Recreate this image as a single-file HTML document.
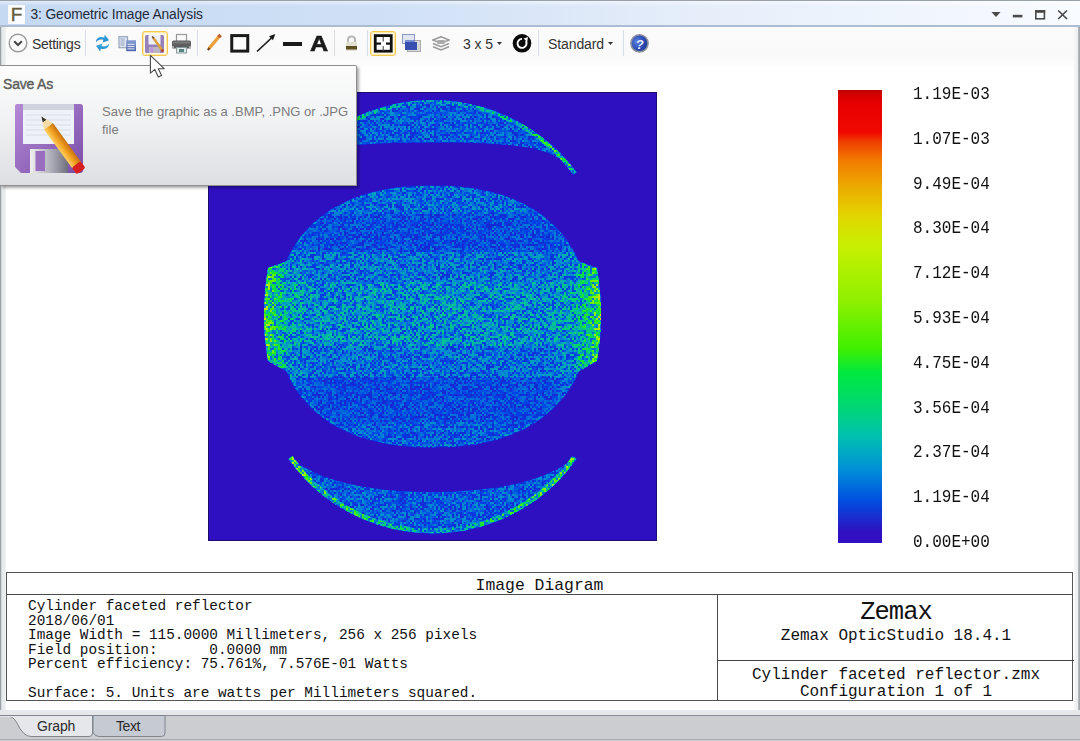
<!DOCTYPE html>
<html><head><meta charset="utf-8">
<style>
*{margin:0;padding:0;box-sizing:border-box}
html,body{width:1080px;height:741px;overflow:hidden;background:#fff}
body{position:relative;font-family:"Liberation Sans",sans-serif}
.abs{position:absolute}
#titlebar{left:0;top:0;width:1080px;height:27px;background:linear-gradient(180deg,rgba(255,255,255,0.5) 0,rgba(255,255,255,0) 5px),linear-gradient(90deg,#c6d9f3 0%,#cfe0f6 35%,#e6eefa 65%,#f8fbff 100%);border-top:1px solid #98a0a8;border-bottom:2px solid #acbdd2}
#title{left:30.5px;top:6.8px;font-size:13.8px;color:#1e2a3a;white-space:nowrap;letter-spacing:-0.12px}
#ficon{left:8px;top:5px;width:17px;height:19px;background:#fbfcfd;color:#675c3e;font-size:19px;line-height:19px;text-align:center;-webkit-text-stroke:0.4px #675c3e}
#toolbar{left:0;top:27px;width:1080px;height:39px;background:linear-gradient(180deg,#fbfbfb 0,#f9f9f9 80%,#fdfdfd 100%)}
.sep{position:absolute;top:30px;width:1px;height:26px;background:#d8dce4}
#content{left:5px;top:66px;width:1070px;height:644px;background:#fff}
#lborder{left:0;top:27px;width:6px;height:683px;background:linear-gradient(90deg,#9aa0a4 0,#9aa0a4 1px,#dfe3e6 1.6px,#e8ebee 2.5px,#e8ebee 5px,#fbfcfc 6px)}
#rborder{left:1074px;top:27px;width:6px;height:683px;background:linear-gradient(90deg,#f6f7f8 0,#eceef0 3.5px,#b4b8bc 4.5px,#9aa0a6 6px)}
.mono{font-family:"Liberation Mono",monospace;color:#111;white-space:pre}

#cbar{left:838px;top:90px;width:44px;height:453px;background:linear-gradient(180deg,#c00000 0.0%,#d80000 1.3%,#e80000 3.3%,#f00800 9.3%,#f04000 11.5%,#f27a00 15.5%,#eca800 21.0%,#e2d400 27.6%,#c8f000 34.2%,#90f000 46.4%,#40f000 57.0%,#00e840 62.5%,#00d870 69.5%,#00c0b0 76.6%,#0090d8 83.7%,#0050e0 90.5%,#3010c0 97.6%,#3010c0 100.0%)}
.lbl{left:913px;font-size:16px;line-height:18px;margin-top:2px;transform:scaleY(1.1);transform-origin:0 14px}
#box{left:6px;top:572px;width:1067px;height:129px;border:1px solid #555}
#tabstrip{display:none}

.tbt{font-size:14px;color:#333;line-height:17px;white-space:nowrap;letter-spacing:-0.28px}
.hl{border:1.6px solid #f4c84e;border-radius:3px;background:#fff9e6;box-shadow:inset 0 0 0 1px #fde9a8}

#tip{left:0;top:65px;width:357px;height:121px;background:linear-gradient(180deg,#fcfcfc 0%,#f1f2f3 45%,#dddfe3 100%);border:1px solid #8e8e8e;border-left:none;border-top-right-radius:2px;box-shadow:2px 2px 3px rgba(0,0,0,0.35)}
</style></head><body>
<div id="titlebar" class="abs"></div>
<div id="ficon" class="abs">F</div>
<div id="title" class="abs">3: Geometric Image Analysis</div>
<div id="toolbar" class="abs"></div>
<div class="sep" style="left:85px"></div>
<div class="sep" style="left:197px"></div>
<div class="sep" style="left:334px"></div>
<div class="sep" style="left:367px"></div>
<div class="sep" style="left:538px"></div>
<div class="sep" style="left:623px"></div>
<svg class="abs" style="left:8px;top:33px" width="20" height="20" viewBox="0 0 20 20"><circle cx="10" cy="10" r="8.8" fill="none" stroke="#9a9a9a" stroke-width="1.4"/><path d="M6.2,8.3 L10,12 L13.8,8.3" fill="none" stroke="#444" stroke-width="2"/></svg>
<div class="abs tbt" style="left:32px;top:35.5px">Settings</div>
<svg class="abs" style="left:95px;top:34px" width="15" height="18" viewBox="0 0 15 18">
<defs><linearGradient id="rfg" x1="0" y1="0" x2="0" y2="1"><stop offset="0" stop-color="#40aee4"/><stop offset="1" stop-color="#1c84c4"/></linearGradient></defs>
<g fill="url(#rfg)">
<path d="M1,8.2 C1,3.6 5.5,2.2 9.2,3.6 L9.8,0.6 L14,6.2 L7.6,8.4 L8.4,5.9 C5.6,5 3,5.8 1,8.2 Z"/>
<path d="M14,9.8 C14,14.4 9.5,15.8 5.8,14.4 L5.2,17.4 L1,11.8 L7.4,9.6 L6.6,12.1 C9.4,13 12,12.2 14,9.8 Z"/>
</g>
</svg>
<svg class="abs" style="left:118px;top:36px" width="20" height="16" viewBox="0 0 20 16">
<defs><linearGradient id="cpf" x1="0" y1="0" x2="0" y2="1"><stop offset="0" stop-color="#8aa0d4"/><stop offset="1" stop-color="#4a62a8"/></linearGradient></defs>
<rect x="1" y="0.7" width="8.5" height="11" fill="#dfe5f0" stroke="#98a4bc" stroke-width="1.2"/>
<rect x="2.5" y="2" width="4" height="8" fill="#b8c4d8"/>
<rect x="8.2" y="4.2" width="9.8" height="11" fill="url(#cpf)"/>
<path d="M9.5,8.3h7M9.5,10.6h7M9.5,12.9h7" stroke="#e8eef8" stroke-width="1"/>
</svg>
<div class="abs hl" style="left:142px;top:31px;width:26px;height:25px"></div>
<svg class="abs" style="left:145px;top:34px" width="20" height="19" viewBox="0 0 20 19">
<rect x="0" y="1" width="19" height="18" rx="1.5" fill="#9682b8"/>
<rect x="3.5" y="1" width="12" height="9.5" fill="#eef0fa"/>
<rect x="4" y="13" width="11" height="6" fill="#b8b4c4"/>
<rect x="5.5" y="13.5" width="2.5" height="5" fill="#c090e0"/>
<path d="M8,3.5 L17.5,16.5" stroke="#dca040" stroke-width="2.6"/>
<path d="M7.2,2.4 L8.6,4.3" stroke="#6a5030" stroke-width="1.6"/>
<path d="M16.8,15.5 L18.2,17.5" stroke="#b04830" stroke-width="2.6"/>
</svg>
<svg class="abs" style="left:171px;top:33px" width="21" height="21" viewBox="0 0 21 21">
<rect x="5.5" y="1.5" width="10" height="7" fill="#fafafa" stroke="#9a9a9a" stroke-width="1.2"/>
<rect x="1" y="7.5" width="19" height="8" rx="1.5" fill="#5e5e5e"/>
<rect x="2" y="8.5" width="17" height="2" fill="#7a7a7a"/>
<rect x="1" y="13" width="2" height="2.5" fill="#aaa"/><rect x="18" y="13" width="2" height="2.5" fill="#aaa"/>
<rect x="5.5" y="14.5" width="10" height="5.5" fill="#dfeaea" stroke="#8a9a9a" stroke-width="1"/>
<rect x="8" y="16" width="5" height="3" fill="#5a8080"/>
</svg>
<svg class="abs" style="left:206px;top:33px" width="17" height="18" viewBox="0 0 17 18">
<path d="M3,15.5 L13.5,3" stroke="#e8a03a" stroke-width="3.4"/>
<path d="M12.6,4.2 L14.6,1.8" stroke="#c05a30" stroke-width="3.4"/>
<path d="M1.8,17 L3.5,15" stroke="#704020" stroke-width="2.2"/>
</svg>
<svg class="abs" style="left:230px;top:34px" width="20" height="19" viewBox="0 0 20 19"><rect x="1.75" y="1.6" width="16" height="15.5" fill="none" stroke="#1a1a1a" stroke-width="3"/></svg>
<svg class="abs" style="left:256px;top:33px" width="21" height="20" viewBox="0 0 21 20"><path d="M1,18.5 L16,4.5" stroke="#1a1a1a" stroke-width="1.7"/><path d="M19.3,0.9 L13,3.2 L17,7.2 Z" fill="#1a1a1a"/></svg>
<div class="abs" style="left:283px;top:41.5px;width:19px;height:4.6px;background:#1a1a1a"></div>
<div class="abs" style="left:309.5px;top:30.5px;font-size:22.5px;font-weight:bold;color:#1a1a1a;line-height:26px;-webkit-text-stroke:0.6px #1a1a1a;transform:scaleX(1.12);transform-origin:0 0">A</div>
<svg class="abs" style="left:345px;top:34px" width="13" height="18" viewBox="0 0 13 18">
<path d="M3,8 V5.5 C3,1.5 10,1.5 10,5.5 V8" fill="none" stroke="#b8b8b8" stroke-width="2"/>
<rect x="1" y="8" width="11" height="9" rx="1.5" fill="#e4e0d0"/>
<rect x="1" y="12" width="11" height="3.5" fill="#5a5020"/>
</svg>
<div class="abs hl" style="left:370px;top:31px;width:26px;height:25px"></div>
<svg class="abs" style="left:373px;top:34px" width="20" height="19" viewBox="0 0 20 19">
<rect x="2.25" y="1.6" width="16" height="15.6" fill="#fff" stroke="#111" stroke-width="2.8"/>
<rect x="3" y="8.5" width="5" height="2.2" fill="#111"/><rect x="13" y="8.5" width="5" height="2.2" fill="#111"/>
<rect x="9.6" y="3" width="1.3" height="4.5" fill="#666"/><rect x="9.6" y="12" width="1.3" height="4.5" fill="#666"/>
</svg>
<svg class="abs" style="left:402px;top:34px" width="19" height="19" viewBox="0 0 19 19">
<rect x="0.5" y="0.5" width="12" height="9" fill="#dfe6f2" stroke="#8a9ac0"/>
<rect x="5.5" y="6.5" width="13" height="11" fill="#d8d8d8" stroke="#aaa"/>
<rect x="3" y="8" width="12" height="8" fill="#3a50b0"/>
<rect x="3" y="6" width="10" height="2" fill="#7890d0"/>
</svg>
<svg class="abs" style="left:432px;top:36px" width="18" height="15" viewBox="0 0 18 15">
<path d="M9,0.8 L17,4 L9,7.2 L1,4 Z" fill="none" stroke="#9a9a9a" stroke-width="1.6"/>
<path d="M1,7.5 L9,10.7 L17,7.5" fill="none" stroke="#9a9a9a" stroke-width="1.6"/>
<path d="M1,10.8 L9,14 L17,10.8" fill="none" stroke="#9a9a9a" stroke-width="1.6"/>
<rect x="5.5" y="4" width="7" height="4" fill="#aaa"/>
</svg>
<div class="abs tbt" style="left:463px;top:35.5px;letter-spacing:-0.1px">3 x 5</div>
<svg class="abs" style="left:497px;top:42px" width="5" height="3" viewBox="0 0 5 3"><path d="M0,0 H5 L2.5,3 Z" fill="#333"/></svg>
<svg class="abs" style="left:512px;top:34px" width="20" height="19" viewBox="0 0 20 19">
<circle cx="10" cy="9.3" r="9.3" fill="#0a0a0a"/>
<path d="M10,4.9 A4.5 4.5 0 1 0 13.9,7.1" fill="none" stroke="#fff" stroke-width="1.9"/>
<path d="M11.6,4.6 L16,3 L15.2,8 Z" fill="#fff"/>
</svg>
<div class="abs tbt" style="left:548px;top:35.5px;letter-spacing:-0.1px">Standard</div>
<svg class="abs" style="left:608px;top:42px" width="5" height="3" viewBox="0 0 5 3"><path d="M0,0 H5 L2.5,3 Z" fill="#333"/></svg>
<svg class="abs" style="left:629px;top:33px" width="21" height="21" viewBox="0 0 21 21">
<defs><radialGradient id="hg" cx="0.35" cy="0.4" r="0.65"><stop offset="0" stop-color="#5a84e0"/><stop offset="0.7" stop-color="#2a48b0"/><stop offset="1" stop-color="#203a90"/></radialGradient></defs>
<circle cx="10.5" cy="10.3" r="8.6" fill="url(#hg)" stroke="#8c929e" stroke-width="1.6"/>
<text x="10.8" y="15.6" font-family="Liberation Sans" font-weight="bold" font-size="13" fill="#e8eeff" text-anchor="middle" transform="skewX(-8) translate(1.5,0)">?</text>
</svg>

<div id="content" class="abs"></div>
<div id="lborder" class="abs"></div>
<div id="rborder" class="abs"></div>

<svg class="abs" id="plot" style="left:208px;top:92px" width="449" height="449" viewBox="0 0 449 449">
<defs>
<filter id="jet" filterUnits="userSpaceOnUse" x="0" y="0" width="449" height="449" color-interpolation-filters="sRGB">
<feTurbulence type="fractalNoise" baseFrequency="0.9" numOctaves="1" seed="7" result="n0"/>
<feColorMatrix in="n0" type="matrix" values="1 0 0 0 0  1 0 0 0 0  1 0 0 0 0  0 0 0 0 1" result="ng"/>
<feFlood x="0" y="0" width="1" height="1" flood-color="#fff" result="fl"/>
<feComposite in="fl" in2="fl" operator="over" x="0" y="0" width="2" height="2" result="cell"/>
<feTile in="cell" result="grid"/>
<feComposite in="ng" in2="grid" operator="in" result="samp"/>
<feConvolveMatrix in="samp" order="2" kernelMatrix="1 1 1 1" divisor="1" preserveAlpha="false" edgeMode="none" result="pix"/>
<feComponentTransfer in="pix" result="nz">
<feFuncR type="linear" slope="4.4" intercept="-1.7"/><feFuncG type="linear" slope="4.4" intercept="-1.7"/><feFuncB type="linear" slope="4.4" intercept="-1.7"/><feFuncA type="linear" slope="0" intercept="1"/>
</feComponentTransfer>
<feComposite in="SourceGraphic" in2="nz" operator="arithmetic" k1="1.1" k2="0.45" k3="0" k4="0" result="mix"/>
<feColorMatrix in="mix" type="matrix" values="1 0 0 0 0  1 0 0 0 0  1 0 0 0 0  0 0 0 0 1" result="gray"/>
<feComponentTransfer in="gray">
<feFuncR type="table" tableValues="0.188 0.000 0.000 0.000 0.000 0.314 0.667 0.902 0.961 0.922 0.753"/>
<feFuncG type="table" tableValues="0.063 0.251 0.549 0.745 0.882 0.941 0.941 0.843 0.510 0.078 0.000"/>
<feFuncB type="table" tableValues="0.753 0.902 0.824 0.627 0.275 0.000 0.000 0.000 0.000 0.000 0.000"/>
</feComponentTransfer>
</filter>
<linearGradient id="earL" gradientUnits="userSpaceOnUse" x1="54" y1="0" x2="90" y2="0"><stop offset="0" stop-color="#808080"/><stop offset="0.15" stop-color="#666666"/><stop offset="0.45" stop-color="#4a4a4a"/><stop offset="1" stop-color="#383838"/></linearGradient>
<linearGradient id="earR" gradientUnits="userSpaceOnUse" x1="395" y1="0" x2="359" y2="0"><stop offset="0" stop-color="#808080"/><stop offset="0.15" stop-color="#666666"/><stop offset="0.45" stop-color="#4a4a4a"/><stop offset="1" stop-color="#383838"/></linearGradient>
<linearGradient id="rim" gradientUnits="userSpaceOnUse" x1="69.5" y1="0" x2="379.5" y2="0"><stop offset="0" stop-color="#fff" stop-opacity="0.07"/><stop offset="0.12" stop-color="#fff" stop-opacity="0"/><stop offset="0.88" stop-color="#fff" stop-opacity="0"/><stop offset="1" stop-color="#fff" stop-opacity="0.07"/></linearGradient>
<linearGradient id="cedge" gradientUnits="userSpaceOnUse" x1="82" y1="0" x2="367" y2="0"><stop offset="0" stop-color="#5c5c5c"/><stop offset="0.3" stop-color="#3d3d3d"/><stop offset="0.5" stop-color="#303030"/><stop offset="0.7" stop-color="#3d3d3d"/><stop offset="1" stop-color="#5c5c5c"/></linearGradient>
<linearGradient id="cedge2" gradientUnits="userSpaceOnUse" x1="82" y1="0" x2="367" y2="0"><stop offset="0" stop-color="#666666"/><stop offset="0.3" stop-color="#4c4c4c"/><stop offset="0.5" stop-color="#333333"/><stop offset="0.7" stop-color="#4c4c4c"/><stop offset="1" stop-color="#666666"/></linearGradient>
<clipPath id="ell"><path d="M379.5,224.5 L379.5,230.0 L379.3,234.5 L379.1,238.7 L378.8,242.7 L378.3,246.6 L377.8,250.4 L377.2,254.1 L376.6,257.7 L375.8,261.2 L374.9,264.6 L373.9,268.0 L372.9,271.3 L371.7,274.6 L370.5,277.8 L369.2,280.9 L367.8,284.0 L366.3,287.0 L364.7,289.9 L363.0,292.8 L361.3,295.7 L359.4,298.4 L357.5,301.1 L355.5,303.8 L353.4,306.4 L351.2,308.9 L349.0,311.4 L346.6,313.8 L344.2,316.2 L341.7,318.5 L339.2,320.7 L336.5,322.8 L333.8,324.9 L331.0,326.9 L328.1,328.9 L325.2,330.8 L322.1,332.6 L319.0,334.4 L315.9,336.1 L312.6,337.7 L309.3,339.2 L306.0,340.7 L302.5,342.1 L299.0,343.4 L295.4,344.7 L291.7,345.9 L288.0,347.0 L284.2,348.0 L280.3,348.9 L276.4,349.8 L272.4,350.6 L268.2,351.4 L264.1,352.0 L259.8,352.6 L255.4,353.1 L250.9,353.5 L246.3,353.9 L241.4,354.2 L236.4,354.3 L231.0,354.5 L224.5,354.5 L218.0,354.5 L212.6,354.3 L207.6,354.2 L202.7,353.9 L198.1,353.5 L193.6,353.1 L189.2,352.6 L184.9,352.0 L180.8,351.4 L176.6,350.6 L172.6,349.8 L168.7,348.9 L164.8,348.0 L161.0,347.0 L157.3,345.9 L153.6,344.7 L150.0,343.4 L146.5,342.1 L143.0,340.7 L139.7,339.2 L136.4,337.7 L133.1,336.1 L130.0,334.4 L126.9,332.6 L123.8,330.8 L120.9,328.9 L118.0,326.9 L115.2,324.9 L112.5,322.8 L109.8,320.7 L107.3,318.5 L104.8,316.2 L102.4,313.8 L100.0,311.4 L97.8,308.9 L95.6,306.4 L93.5,303.8 L91.5,301.1 L89.6,298.4 L87.7,295.7 L86.0,292.8 L84.3,289.9 L82.7,287.0 L81.2,284.0 L79.8,280.9 L78.5,277.8 L77.3,274.6 L76.1,271.3 L75.1,268.0 L74.1,264.6 L73.2,261.2 L72.4,257.7 L71.8,254.1 L71.2,250.4 L70.7,246.6 L70.2,242.7 L69.9,238.7 L69.7,234.5 L69.5,230.0 L69.5,224.5 L69.5,219.0 L69.7,214.5 L69.9,210.3 L70.2,206.3 L70.7,202.4 L71.2,198.6 L71.8,194.9 L72.4,191.3 L73.2,187.8 L74.1,184.4 L75.1,181.0 L76.1,177.7 L77.3,174.4 L78.5,171.2 L79.8,168.1 L81.2,165.0 L82.7,162.0 L84.3,159.1 L86.0,156.2 L87.7,153.3 L89.6,150.6 L91.5,147.9 L93.5,145.2 L95.6,142.6 L97.8,140.1 L100.0,137.6 L102.4,135.2 L104.8,132.8 L107.3,130.5 L109.8,128.3 L112.5,126.2 L115.2,124.1 L118.0,122.1 L120.9,120.1 L123.8,118.2 L126.9,116.4 L130.0,114.6 L133.1,112.9 L136.4,111.3 L139.7,109.8 L143.0,108.3 L146.5,106.9 L150.0,105.6 L153.6,104.3 L157.3,103.1 L161.0,102.0 L164.8,101.0 L168.7,100.1 L172.6,99.2 L176.6,98.4 L180.8,97.6 L184.9,97.0 L189.2,96.4 L193.6,95.9 L198.1,95.5 L202.7,95.1 L207.6,94.8 L212.6,94.7 L218.0,94.5 L224.5,94.5 L231.0,94.5 L236.4,94.7 L241.4,94.8 L246.3,95.1 L250.9,95.5 L255.4,95.9 L259.8,96.4 L264.1,97.0 L268.2,97.6 L272.4,98.4 L276.4,99.2 L280.3,100.1 L284.2,101.0 L288.0,102.0 L291.7,103.1 L295.4,104.3 L299.0,105.6 L302.5,106.9 L306.0,108.3 L309.3,109.8 L312.6,111.3 L315.9,112.9 L319.0,114.6 L322.1,116.4 L325.2,118.2 L328.1,120.1 L331.0,122.1 L333.8,124.1 L336.5,126.2 L339.2,128.3 L341.7,130.5 L344.2,132.8 L346.6,135.2 L349.0,137.6 L351.2,140.1 L353.4,142.6 L355.5,145.2 L357.5,147.9 L359.4,150.6 L361.3,153.3 L363.0,156.2 L364.7,159.1 L366.3,162.0 L367.8,165.0 L369.2,168.1 L370.5,171.2 L371.7,174.4 L372.9,177.7 L373.9,181.0 L374.9,184.4 L375.8,187.8 L376.6,191.3 L377.2,194.9 L377.8,198.6 L378.3,202.4 L378.8,206.3 L379.1,210.3 L379.3,214.5 L379.5,219.0 Z"/></clipPath>
</defs>
<g filter="url(#jet)">
<rect x="0" y="0" width="449" height="449" fill="#000"/>
<g clip-path="url(#ell)"><rect x="0" y="0" width="449" height="122" fill="#262626"/><rect x="0" y="122" width="449" height="38" fill="#1d1d1d"/><rect x="0" y="160" width="449" height="30" fill="#292929"/><rect x="0" y="190" width="449" height="64" fill="#343434"/><rect x="0" y="254" width="449" height="31" fill="#282828"/><rect x="0" y="285" width="449" height="45" fill="#1c1c1c"/><rect x="0" y="330" width="449" height="119" fill="#222222"/><rect x="0" y="0" width="449" height="449" fill="url(#rim)"/></g>
<path d="M379.5,224.5 L379.5,230.0 L379.3,234.5 L379.1,238.7 L378.8,242.7 L378.3,246.6 L377.8,250.4 L377.2,254.1 L376.6,257.7 L375.8,261.2 L374.9,264.6 L373.9,268.0 L372.9,271.3 L371.7,274.6 L370.5,277.8 L369.2,280.9 L367.8,284.0 L366.3,287.0 L364.7,289.9 L363.0,292.8 L361.3,295.7 L359.4,298.4 L357.5,301.1 L355.5,303.8 L353.4,306.4 L351.2,308.9 L349.0,311.4 L346.6,313.8 L344.2,316.2 L341.7,318.5 L339.2,320.7 L336.5,322.8 L333.8,324.9 L331.0,326.9 L328.1,328.9 L325.2,330.8 L322.1,332.6 L319.0,334.4 L315.9,336.1 L312.6,337.7 L309.3,339.2 L306.0,340.7 L302.5,342.1 L299.0,343.4 L295.4,344.7 L291.7,345.9 L288.0,347.0 L284.2,348.0 L280.3,348.9 L276.4,349.8 L272.4,350.6 L268.2,351.4 L264.1,352.0 L259.8,352.6 L255.4,353.1 L250.9,353.5 L246.3,353.9 L241.4,354.2 L236.4,354.3 L231.0,354.5 L224.5,354.5 L218.0,354.5 L212.6,354.3 L207.6,354.2 L202.7,353.9 L198.1,353.5 L193.6,353.1 L189.2,352.6 L184.9,352.0 L180.8,351.4 L176.6,350.6 L172.6,349.8 L168.7,348.9 L164.8,348.0 L161.0,347.0 L157.3,345.9 L153.6,344.7 L150.0,343.4 L146.5,342.1 L143.0,340.7 L139.7,339.2 L136.4,337.7 L133.1,336.1 L130.0,334.4 L126.9,332.6 L123.8,330.8 L120.9,328.9 L118.0,326.9 L115.2,324.9 L112.5,322.8 L109.8,320.7 L107.3,318.5 L104.8,316.2 L102.4,313.8 L100.0,311.4 L97.8,308.9 L95.6,306.4 L93.5,303.8 L91.5,301.1 L89.6,298.4 L87.7,295.7 L86.0,292.8 L84.3,289.9 L82.7,287.0 L81.2,284.0 L79.8,280.9 L78.5,277.8 L77.3,274.6 L76.1,271.3 L75.1,268.0 L74.1,264.6 L73.2,261.2 L72.4,257.7 L71.8,254.1 L71.2,250.4 L70.7,246.6 L70.2,242.7 L69.9,238.7 L69.7,234.5 L69.5,230.0 L69.5,224.5 L69.5,219.0 L69.7,214.5 L69.9,210.3 L70.2,206.3 L70.7,202.4 L71.2,198.6 L71.8,194.9 L72.4,191.3 L73.2,187.8 L74.1,184.4 L75.1,181.0 L76.1,177.7 L77.3,174.4 L78.5,171.2 L79.8,168.1 L81.2,165.0 L82.7,162.0 L84.3,159.1 L86.0,156.2 L87.7,153.3 L89.6,150.6 L91.5,147.9 L93.5,145.2 L95.6,142.6 L97.8,140.1 L100.0,137.6 L102.4,135.2 L104.8,132.8 L107.3,130.5 L109.8,128.3 L112.5,126.2 L115.2,124.1 L118.0,122.1 L120.9,120.1 L123.8,118.2 L126.9,116.4 L130.0,114.6 L133.1,112.9 L136.4,111.3 L139.7,109.8 L143.0,108.3 L146.5,106.9 L150.0,105.6 L153.6,104.3 L157.3,103.1 L161.0,102.0 L164.8,101.0 L168.7,100.1 L172.6,99.2 L176.6,98.4 L180.8,97.6 L184.9,97.0 L189.2,96.4 L193.6,95.9 L198.1,95.5 L202.7,95.1 L207.6,94.8 L212.6,94.7 L218.0,94.5 L224.5,94.5 L231.0,94.5 L236.4,94.7 L241.4,94.8 L246.3,95.1 L250.9,95.5 L255.4,95.9 L259.8,96.4 L264.1,97.0 L268.2,97.6 L272.4,98.4 L276.4,99.2 L280.3,100.1 L284.2,101.0 L288.0,102.0 L291.7,103.1 L295.4,104.3 L299.0,105.6 L302.5,106.9 L306.0,108.3 L309.3,109.8 L312.6,111.3 L315.9,112.9 L319.0,114.6 L322.1,116.4 L325.2,118.2 L328.1,120.1 L331.0,122.1 L333.8,124.1 L336.5,126.2 L339.2,128.3 L341.7,130.5 L344.2,132.8 L346.6,135.2 L349.0,137.6 L351.2,140.1 L353.4,142.6 L355.5,145.2 L357.5,147.9 L359.4,150.6 L361.3,153.3 L363.0,156.2 L364.7,159.1 L366.3,162.0 L367.8,165.0 L369.2,168.1 L370.5,171.2 L371.7,174.4 L372.9,177.7 L373.9,181.0 L374.9,184.4 L375.8,187.8 L376.6,191.3 L377.2,194.9 L377.8,198.6 L378.3,202.4 L378.8,206.3 L379.1,210.3 L379.3,214.5 L379.5,219.0 Z" fill="none" stroke="#333333" stroke-width="2" stroke-opacity="0.6"/>
<path d="M79.4,169 L60.0,176 Q52.0,224.5 60.0,269 L79.4,280 Z" fill="url(#earL)"/>
<path d="M369.6,169 L389.0,176 Q397.0,224.5 389.0,269 L369.6,280 Z" fill="url(#earR)"/>
<path d="M82,81.5 A177.7 177.7 0 0 1 367,81.5 C349,56 318,50.5 224.5,50.5 C131,50.5 100,56 82,81.5 Z" fill="#222222"/>
<path d="M82,81.5 A177.7 177.7 0 0 1 367,81.5" fill="none" stroke="url(#cedge)" stroke-width="4"/>
<path d="M82.5,365.5 A174 174 0 0 0 366.5,365.5 C344,385 299,400 224.5,400 C150,400 105,385 82.5,365.5 Z" fill="#222222"/>
<path d="M82.5,365.5 A174 174 0 0 0 366.5,365.5" fill="none" stroke="url(#cedge2)" stroke-width="5"/>
</g>
<rect x="0.5" y="0.5" width="448" height="448" fill="none" stroke="#1c0a70" stroke-width="1"/>
</svg>

<div class="abs" id="cbar"></div>
<div class="abs mono lbl" style="top:84.0px">1.19E-03</div>
<div class="abs mono lbl" style="top:128.8px">1.07E-03</div>
<div class="abs mono lbl" style="top:173.6px">9.49E-04</div>
<div class="abs mono lbl" style="top:218.4px">8.30E-04</div>
<div class="abs mono lbl" style="top:263.2px">7.12E-04</div>
<div class="abs mono lbl" style="top:308.0px">5.93E-04</div>
<div class="abs mono lbl" style="top:352.8px">4.75E-04</div>
<div class="abs mono lbl" style="top:397.6px">3.56E-04</div>
<div class="abs mono lbl" style="top:442.4px">2.37E-04</div>
<div class="abs mono lbl" style="top:487.2px">1.19E-04</div>
<div class="abs mono lbl" style="top:532.0px">0.00E+00</div>

<div class="abs" id="box"></div>
<div class="abs" style="left:6px;top:594px;width:1067px;height:1px;background:#4a4a4a"></div>
<div class="abs" style="left:717px;top:594px;width:1px;height:107px;background:#4a4a4a"></div>
<div class="abs" style="left:717px;top:660px;width:357px;height:1px;background:#444"></div>
<div class="abs mono" style="left:6px;top:576.5px;width:1067px;text-align:center;font-size:16.4px;line-height:18px">Image Diagram</div>
<div class="abs mono" style="left:28px;top:599.3px;font-size:14.4px;line-height:14.45px">Cylinder faceted reflector
2018/06/01
Image Width = 115.0000 Millimeters, 256 x 256 pixels
Field position:      0.0000 mm
Percent efficiency: 75.761%, 7.576E-01 Watts

Surface: 5. Units are watts per Millimeters squared.</div>
<div class="abs mono" style="left:718px;top:600px;width:356px;text-align:center;font-size:25.5px;line-height:26px;letter-spacing:-1px">Zemax</div>
<div class="abs mono" style="left:718px;top:627px;width:356px;text-align:center;font-size:16px;line-height:18px">Zemax OpticStudio 18.4.1</div>
<div class="abs mono" style="left:718px;top:667px;width:356px;text-align:center;font-size:16px;line-height:17.4px">Cylinder faceted reflector.zmx
Configuration 1 of 1</div>
<div class="abs" id="tabstrip"></div>

<div class="abs" id="tip"></div>
<div class="abs" style="left:3px;top:75.5px;font-size:14px;color:#5c5c5c;line-height:16px;-webkit-text-stroke:0.4px #5c5c5c;letter-spacing:-0.2px">Save As</div>
<div class="abs" style="left:102px;top:103px;font-size:13px;color:#7c7c7c;line-height:18.3px;width:260px">Save the graphic as a .BMP, .PNG or .JPG<br>file</div>
<svg class="abs" style="left:14px;top:103px" width="72" height="72" viewBox="0 0 72 72">
<defs>
<linearGradient id="fpg" x1="0" y1="0" x2="1" y2="1"><stop offset="0" stop-color="#b48ad6"/><stop offset="1" stop-color="#7a4ea8"/></linearGradient>
<linearGradient id="shut" x1="0" y1="0" x2="1" y2="0"><stop offset="0" stop-color="#f0f0f0"/><stop offset="0.6" stop-color="#a8a8b4"/><stop offset="1" stop-color="#70707c"/></linearGradient>
<linearGradient id="pen" x1="0" y1="0" x2="1" y2="0"><stop offset="0" stop-color="#ffd060"/><stop offset="0.5" stop-color="#f0a020"/><stop offset="1" stop-color="#c87010"/></linearGradient>
</defs>
<path d="M3,1 H66 A3 3 0 0 1 69,4 V67 A3 3 0 0 1 66,70 H7 L1,64 V3 A2 2 0 0 1 3,1 Z" fill="url(#fpg)"/>
<rect x="9" y="1" width="51" height="40" fill="#eef1f8"/>
<rect x="9" y="1" width="51" height="6" fill="#d0d4dc"/>
<path d="M12,12H57M12,17H57M12,22H57M12,27H57M12,32H57" stroke="#d8dde8" stroke-width="1"/>
<rect x="16" y="46" width="38" height="24" fill="url(#shut)"/>
<rect x="21.5" y="48" width="9.5" height="20" fill="#9a6cc0"/>
<g transform="translate(47.4,41.1) rotate(-36)">
<rect x="-5.5" y="-22" width="11" height="48" fill="url(#pen)"/>
<path d="M-5.5,-22 L0,-34 L5.5,-22 Z" fill="#f4dca8"/>
<path d="M-2.2,-28.6 L0,-34 L2.2,-28.6 Z" fill="#303030"/>
<rect x="-5.5" y="25" width="11" height="8.5" rx="2" fill="#d82020"/>
</g>
</svg>
<svg class="abs" style="left:146px;top:51px" width="22" height="30" viewBox="0 0 22 30">
<path d="M4.4,4.3 L4.4,22.1 L8.8,18.4 L12.3,26 L15.6,24.6 L12.3,17.8 L18.2,17.6 Z" fill="#fff" stroke="#4a4a4a" stroke-width="1.1" stroke-linejoin="round"/>
</svg>

<svg class="abs" style="left:990px;top:9px" width="80" height="12" viewBox="0 0 80 12">
<path d="M1.5,3 H10.5 L6,8 Z" fill="#4a4a4a"/>
<rect x="22.8" y="5.8" width="9.6" height="2.6" fill="#4a4a4a"/>
<rect x="45.8" y="1.8" width="8.6" height="8" fill="none" stroke="#4a4a4a" stroke-width="1.6"/>
<rect x="45" y="1" width="10.2" height="2.8" fill="#4a4a4a"/>
<path d="M68.2,1.5 L77,10 M77,1.5 L68.2,10" stroke="#4a4a4a" stroke-width="1.7"/>
</svg>

<div class="abs" style="left:0;top:710px;width:1080px;height:5px;background:#e6e7ea"></div>
<svg class="abs" style="left:0;top:710px" width="1080" height="31" viewBox="0 0 1080 31">
<rect x="0" y="5" width="1080" height="26" fill="#cccdd1"/>
<path d="M0,5.5 H1080" stroke="#8a8e96" stroke-width="1"/>
<path d="M93,5.5 H165 V23 Q165,26.5 161.5,26.5 H99 Q96,26.5 93,23 Z" fill="#c6cad3" stroke="#80858e" stroke-width="1"/>
<path d="M-1,5.5 H7 Q13,6 17,13 Q23,26.5 31,26.5 H89 Q92.5,26.5 92.5,23 V5.5 Z" fill="#e6e7ea" stroke="#80858e" stroke-width="1"/>
<rect x="0" y="6" width="92" height="1" fill="#e6e7ea"/>
<path d="M0,29.5 H1080" stroke="#a8abb2" stroke-width="1"/>
</svg>
<div class="abs" style="left:37px;top:718px;font-size:14px;color:#2a2a2a;line-height:16px;letter-spacing:-0.15px">Graph</div>
<div class="abs" style="left:116px;top:718px;font-size:14px;color:#2a2a2a;line-height:16px;letter-spacing:-0.4px">Text</div>
</body></html>
